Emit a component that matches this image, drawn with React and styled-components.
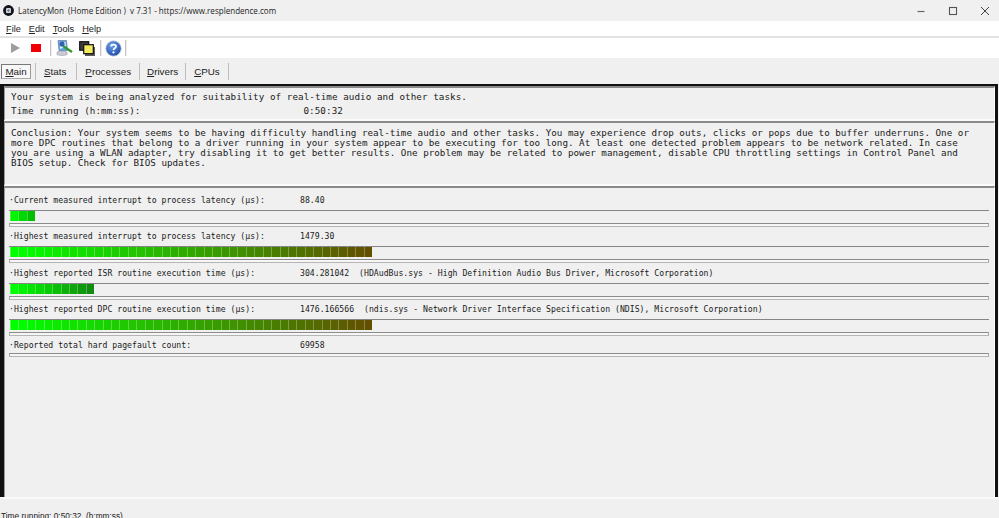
import React from 'react';
import styled, { createGlobalStyle } from 'styled-components';

const Global = createGlobalStyle`
  html, body { margin: 0; padding: 0; background: #f0f0f0; overflow: hidden; }
  #root { width: 999px; height: 518px; overflow: hidden; }
`;
const Window = styled.div`
  width: 999px; height: 518px; display: flex; flex-direction: column; overflow: hidden;
  font-family: "Liberation Sans", Arial, sans-serif; color: #111; background: #f0f0f0;
`;
const TitleBar = styled.div`
  height: 21px; flex: none; display: flex; align-items: center; padding: 0 0 0 3px; background: #f0f0f0;
  font-family: "Open Sans", "Liberation Sans", sans-serif; font-size: 8.05px; color: #222;
`;
const TitleText = styled.span` margin-left: 4px; white-space: pre; flex: 1; `;
const WinButtons = styled.div` display: flex; align-items: center; gap: 22px; padding-right: 9px; `;
const MenuBar = styled.div`
  height: 17px; box-sizing: border-box; flex: none; background: #fff; border-bottom: 2px solid #e3e3e3; display: flex; align-items: center;
  gap: 8px; padding-left: 6px; font-size: 9.2px;
`;
const MenuItem = styled.span` color: #222; u { text-decoration-thickness: 1px; text-underline-offset: 1px; } `;
const ToolBar = styled.div`
  height: 20px; flex: none; background: #fff; display: flex; align-items: center; padding-left: 8px;
`;
const ToolIcon = styled.span` display: inline-flex; width: ${p => p.$w}px; height: 20px; align-items: center; justify-content: center; flex: none; `;
const ToolSep = styled.span` width: 1px; height: 16px; background: #c4c4c4; border-right: 1px solid #eee; flex: none; margin: ${p => p.$m}; `;
const TabBar = styled.div`
  height: 26px; flex: none; display: flex; align-items: center; background: #f0f0f0; font-size: 9.8px; padding-left: 1px;
`;
const Tab = styled.span`
  color: #222; padding: ${p => p.$pad || '0 8px'}; box-sizing: border-box; height: 16px;
  display: inline-flex; align-items: center; justify-content: center;
  u { text-decoration-thickness: 1px; text-underline-offset: 1px; }
`;
const ActiveTab = styled(Tab)`
  width: 30px; height: 15px; padding: 0; margin-right: 4px; background: #f7f7f7;
  border: 1px solid #777; border-right-color: #999; border-bottom-color: #aaa;
`;
const TabSep = styled.span` width: 1px; height: 17px; background: #bdbdbd; flex: none; `;
const Client = styled.main`
  flex: none; height: 413px; box-sizing: border-box; border-top: 2px solid #111; border-left: 4px solid #111;
  border-right: 3px solid #111; margin-right: 1px; background: #f0f0f0; display: flex; flex-direction: column;
`;
const Panel = styled.section`
  flex: none; height: ${p => p.$h}px; box-sizing: border-box; padding: ${p => p.$pad};
  border-top: 2px solid #8a8a8a; border-left: 1px solid #9a9a9a; border-bottom: 2px solid #fbfbfb; border-right: 1px solid #fff;
  font-family: "DejaVu Sans Mono", "Liberation Mono", monospace; font-size: 9.24px; color: #1a1a1a; white-space: pre;
`;
const StatusLine = styled.div` height: 14px; line-height: 14px; display: flex; letter-spacing: .07px; `;
const TimeValue = styled.span` margin-left: 163px; `;
const Conclusion = styled.div` line-height: 10px; letter-spacing: .01px; `;
const MeterPanel = styled(Panel)` flex: 1; height: auto; padding: 0 0 0 4px; border-bottom: none; font-size: 8.15px; letter-spacing: .03px; `;
const Row = styled.div` height: 36.3px; box-sizing: border-box; padding-top: 6px; `;
const RowText = styled.div` height: 16px; line-height: 13px; display: flex; `;
const RowLabel = styled.span` width: 291px; flex: none; `;
const RowValue = styled.span` `;
const Meter = styled.div`
  height: 17px; width: 980px; box-sizing: border-box; border-top: 1px solid #858585; display: flex; flex-direction: column;
`;
const Segs = styled.div` height: 11px; display: flex; padding: 0 0 0 1px; box-sizing: border-box; `;
const Seg = styled.span`
  width: 8.43px; height: 10px; flex: none; box-sizing: border-box; border-left: 1px solid rgba(255,255,255,.28);
`;
const Track = styled.div`
  height: 4px; margin-top: 1px; box-sizing: border-box; border-top: 1px solid #8c8c8c; border-bottom: 1px solid #b5b5b5;
  border-left: 1px solid #aaa; border-right: 1px solid #aaa; background: #f6f6f6;
`;
const LoneTrack = styled(Track)` width: 980px; margin-top: -2px; `;
const StatusBar = styled.footer`
  flex: 1; border-top: 2px solid #f9f9f9; background: #f0f0f0; font-size: 8.3px; color: #222; padding: 11px 0 0 1px; white-space: pre;
  font-family: "Liberation Sans", sans-serif; line-height: 12px;
`;

const Und = ({ c, r }) => <><u>{c}</u>{r}</>;

const mix = (a, b, t) => Math.round(a + (b - a) * t);
const segColor = (mode, i) => {
  if (mode === 'big') { const t = i / 42; return `rgb(${mix(0, 98, t)},${mix(255, 80, t)},0)`; }
  if (mode === 'isr') { const t = i / 9; return `rgb(${mix(0, 18, t)},${mix(255, 140, t)},${mix(0, 14, t)})`; }
  const t = i / 2; return `rgb(0,${mix(245, 190, t)},0)`;
};

const rows = [
  { l: '·Current measured interrupt to process latency (µs):', v: '88.40', n: 3, m: 'cur' },
  { l: '·Highest measured interrupt to process latency (µs):', v: '1479.30', n: 43, m: 'big' },
  { l: '·Highest reported ISR routine execution time (µs):', v: '304.281042  (HDAudBus.sys - High Definition Audio Bus Driver, Microsoft Corporation)', n: 10, m: 'isr' },
  { l: '·Highest reported DPC routine execution time (µs):', v: '1476.166566  (ndis.sys - Network Driver Interface Specification (NDIS), Microsoft Corporation)', n: 43, m: 'big' },
  { l: '·Reported total hard pagefault count:', v: '69958', n: 0, m: 'cur', lone: true },
];

const AppLogo = () => (
  <svg width="11" height="11" viewBox="0 0 13 13">
    <circle cx="6.5" cy="6.5" r="6.4" fill="#14141c" />
    <rect x="3.6" y="3.4" width="5.8" height="6.2" rx="1.4" fill="#d3d8e0" />
    <circle cx="6.5" cy="6.5" r="1.4" fill="#6a7484" />
  </svg>
);
const Minimize = () => <svg width="10" height="10" viewBox="0 0 10 10"><path d="M1.5 5.5h7" stroke="#666" strokeWidth="1.2" /></svg>;
const Maximize = () => <svg width="10" height="10" viewBox="0 0 10 10"><rect x="1.5" y="1.5" width="7" height="7" fill="none" stroke="#555" strokeWidth="1.1" /></svg>;
const CloseI = () => <svg width="10" height="10" viewBox="0 0 10 10"><path d="M1 1l8 8M9 1l-8 8" stroke="#444" strokeWidth="1" /></svg>;
const Play = () => <svg width="11" height="12" viewBox="0 0 11 12"><path d="M1 1l9 5-9 5z" fill="#9d9d9d" /></svg>;
const Stop = () => <svg width="10" height="8" viewBox="0 0 10 8"><rect width="10" height="8" fill="#f00000" /></svg>;
const Monitor = () => (
  <svg width="17" height="16" viewBox="0 0 17 16">
    <path d="M2 .5h8.5l1 10H3z" fill="#5aa4e6" stroke="#6a7c98" strokeWidth=".7" />
    <path d="M3.5 2h6l.6 4.5-6 2.5z" fill="#d8ecfc" />
    <path d="M1 12c3-1.2 7-1.2 10 0v2.6c-3 1.2-7 1.2-10 0z" fill="#c9cbd6" stroke="#8a8d9c" strokeWidth=".5" />
    <path d="M7 6l9 6" stroke="#2f9a2f" strokeWidth="2.2" />
    <circle cx="6" cy="4" r="2.6" fill="#3560aa" />
  </svg>
);
const Windows = () => (
  <svg width="16" height="15" viewBox="0 0 16 15">
    <rect x="6" y="6" width="10" height="9" fill="#5c5c5c" />
    <rect x=".7" y=".7" width="9" height="8.5" fill="#3c3c3c" stroke="#111" strokeWidth="1.2" />
    <rect x="4.7" y="3.7" width="9.6" height="9" fill="#f1ec62" stroke="#111" strokeWidth="1.2" />
  </svg>
);
const HelpI = () => (
  <svg width="17" height="17" viewBox="0 0 17 17">
    <defs><radialGradient id="hg" cx=".4" cy=".3" r=".8"><stop offset="0" stopColor="#6ea4ee" /><stop offset="1" stopColor="#143f9e" /></radialGradient></defs>
    <circle cx="8.5" cy="8.5" r="7.6" fill="url(#hg)" stroke="#a8b6d0" strokeWidth=".8" />
    <path d="M6 6.3c.3-2.3 5-2.4 5 .2 0 1.8-2.5 1.8-2.5 3.6" fill="none" stroke="#fff" strokeWidth="1.7" />
    <circle cx="8.5" cy="12.4" r="1.1" fill="#fff" />
  </svg>
);

export default function App() {
  return (
    <Window>
      <Global />
      <TitleBar>
        <AppLogo />
        <TitleText>{'LatencyMon  (Home Edition )  v 7.31 - https://www.resplendence.com'}</TitleText>
        <WinButtons><Minimize /><Maximize /><CloseI /></WinButtons>
      </TitleBar>
      <MenuBar>
        <MenuItem><Und c="F" r="ile" /></MenuItem>
        <MenuItem><Und c="E" r="dit" /></MenuItem>
        <MenuItem><Und c="T" r="ools" /></MenuItem>
        <MenuItem><Und c="H" r="elp" /></MenuItem>
      </MenuBar>
      <ToolBar>
        <ToolIcon $w={14}><Play /></ToolIcon>
        <ToolIcon $w={28}><Stop /></ToolIcon>
        <ToolSep $m="0" />
        <ToolIcon $w={24}><Monitor /></ToolIcon>
        <ToolIcon $w={22}><Windows /></ToolIcon>
        <ToolSep $m="0 2px" />
        <ToolIcon $w={18}><HelpI /></ToolIcon>
        <ToolSep $m="0 0 0 3px" />
      </ToolBar>
      <TabBar>
        <ActiveTab><Und c="M" r="ain" /></ActiveTab>
        <TabSep />
        <Tab $pad="0 10px 0 8px"><Und c="S" r="tats" /></Tab>
        <TabSep />
        <Tab><Und c="P" r="rocesses" /></Tab>
        <TabSep />
        <Tab $pad="0 7px"><Und c="D" r="rivers" /></Tab>
        <TabSep />
        <Tab><Und c="C" r="PUs" /></Tab>
        <TabSep />
      </TabBar>
      <Client>
        <Panel $h={35} $pad="2px 0 0 6px">
          <StatusLine>Your system is being analyzed for suitability of real-time audio and other tasks.</StatusLine>
          <StatusLine>Time running (h:mm:ss):<TimeValue>0:50:32</TimeValue></StatusLine>
        </Panel>
        <Panel $h={65} $pad="5px 0 0 6px">
          <Conclusion>{`Conclusion: Your system seems to be having difficulty handling real-time audio and other tasks. You may experience drop outs, clicks or pops due to buffer underruns. One or
more DPC routines that belong to a driver running in your system appear to be executing for too long. At least one detected problem appears to be network related. In case
you are using a WLAN adapter, try disabling it to get better results. One problem may be related to power management, disable CPU throttling settings in Control Panel and
BIOS setup. Check for BIOS updates.`}</Conclusion>
        </Panel>
        <MeterPanel>
          {rows.map((r) => (
            <Row key={r.l}>
              <RowText><RowLabel>{r.l}</RowLabel><RowValue>{r.v}</RowValue></RowText>
              {r.lone ? <LoneTrack /> : (
                <Meter>
                  <Segs>
                    {Array.from({ length: r.n }, (_, i) => <Seg key={i} style={{ background: segColor(r.m, i) }} />)}
                  </Segs>
                  <Track />
                </Meter>
              )}
            </Row>
          ))}
        </MeterPanel>
      </Client>
      <StatusBar>Time running: 0:50:32  (h:mm:ss)</StatusBar>
    </Window>
  );
}
